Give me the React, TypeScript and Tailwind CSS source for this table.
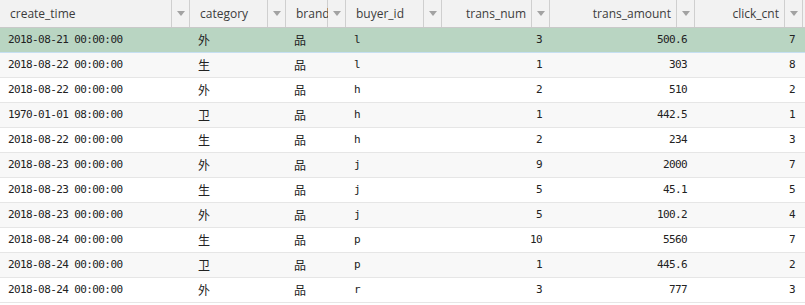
import React from 'react';

type Col = { key: string; label: string; width: string; main: string; align: 'left' | 'right' };

const columns: Col[] = [
  { key: 'create_time', label: 'create_time', width: 'w-[190px]', main: 'w-[172px]', align: 'left' },
  { key: 'category', label: 'category', width: 'w-[96px]', main: 'w-[78px]', align: 'left' },
  { key: 'brand', label: 'brand', width: 'w-[60px]', main: 'w-[42px]', align: 'left' },
  { key: 'buyer_id', label: 'buyer_id', width: 'w-[96px]', main: 'w-[78px]', align: 'left' },
  { key: 'trans_num', label: 'trans_num', width: 'w-[108px]', main: 'w-[90px]', align: 'right' },
  { key: 'trans_amount', label: 'trans_amount', width: 'w-[145px]', main: 'w-[127px]', align: 'right' },
  { key: 'click_cnt', label: 'click_cnt', width: 'w-[108px]', main: 'w-[90px]', align: 'right' },
];

const rows: string[][] = [
  ['2018-08-21 00:00:00', '外', '品', 'l', '3', '500.6', '7'],
  ['2018-08-22 00:00:00', '生', '品', 'l', '1', '303', '8'],
  ['2018-08-22 00:00:00', '外', '品', 'h', '2', '510', '2'],
  ['1970-01-01 08:00:00', '卫', '品', 'h', '1', '442.5', '1'],
  ['2018-08-22 00:00:00', '生', '品', 'h', '2', '234', '3'],
  ['2018-08-23 00:00:00', '外', '品', 'j', '9', '2000', '7'],
  ['2018-08-23 00:00:00', '生', '品', 'j', '5', '45.1', '5'],
  ['2018-08-23 00:00:00', '外', '品', 'j', '5', '100.2', '4'],
  ['2018-08-24 00:00:00', '生', '品', 'p', '10', '5560', '7'],
  ['2018-08-24 00:00:00', '卫', '品', 'p', '1', '445.6', '2'],
  ['2018-08-24 00:00:00', '外', '品', 'r', '3', '777', '3'],
];

function Arrow() {
  return (
    <svg width="8" height="5" viewBox="0 0 8 5">
      <polygon points="0,0 8,0 4,5" fill="#a2a2a2" />
    </svg>
  );
}

function rowClass(i: number) {
  if (i === 0) return 'bg-[#b9d5c2] border-b border-[#c6e0f2]';
  return i % 2 === 1 ? 'bg-[#f8f8f8] border-b border-[#e6e6e6]' : 'bg-white border-b border-[#e6e6e6]';
}

export default function App() {
  return (
    <div className="w-[805px] h-[305px] bg-white overflow-hidden">
      <div className="flex h-[28px] bg-[#f2f2f2] border-b border-[#c9c9c9] font-['Open_Sans','Noto_Sans',sans-serif] text-[12px] text-[#3c3c3c]">
        {columns.map((c) => (
          <div key={c.key} className={`${c.width} flex shrink-0`}>
            <div
              className={`${c.main} flex items-center whitespace-nowrap border-r border-[#cfcfcf] ${
                c.align === 'right' ? 'justify-end pr-[5px]' : 'pl-[10px]'
              }`}
            >
              {c.label}
            </div>
            <div className="w-[18px] flex items-center justify-center border-r border-[#cfcfcf] bg-[#f2f2f2]">
              <Arrow />
            </div>
          </div>
        ))}
        <div className="flex-1" />
      </div>
      <div className="font-['DejaVu_Sans_Mono','Noto_Sans_CJK_SC',monospace] text-[11px] tracking-[-0.6px] text-[#222]">
        {rows.map((r, i) => (
          <div key={i} className={`flex h-[25px] ${rowClass(i)}`}>
            {columns.map((c, j) => (
              <div
                key={c.key}
                className={`${c.width} shrink-0 flex items-center whitespace-nowrap ${
                  c.align === 'right' ? 'justify-end pr-[8px]' : 'pl-[8px]'
                }`}
              >
                {j === 1 || j === 2 ? (
                  <span className="font-['Noto_Sans_CJK_SC',sans-serif] text-[12px] tracking-normal">{r[j]}</span>
                ) : (
                  r[j]
                )}
              </div>
            ))}
            <div className="flex-1" />
          </div>
        ))}
      </div>
    </div>
  );
}
